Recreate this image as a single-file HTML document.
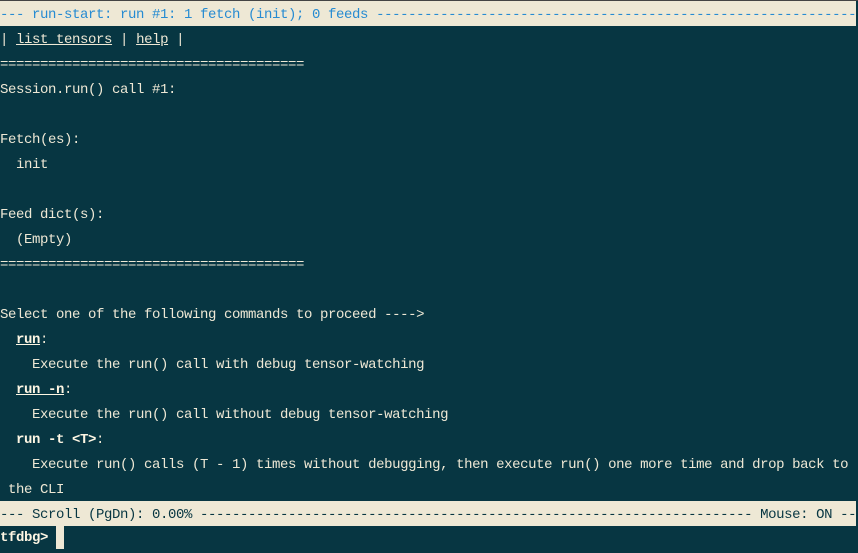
<!DOCTYPE html>
<html><head><style>
html,body{margin:0;padding:0;background:#073642;width:858px;height:553px;overflow:hidden}
.t{position:absolute;left:0;top:0;width:858px;height:1px;background:#444}
.r{position:absolute;left:0;width:856px;height:25px;line-height:25px;font-family:"Liberation Mono",monospace;font-size:14px;letter-spacing:-0.4px;color:#eee8d5;white-space:pre;overflow:hidden}
.r span.x{position:relative;top:2px}
.bar{background:#eee8d5;color:#268bd2}
.bar2{background:#eee8d5;color:#073642}
b{color:#fdf6e3}
u{text-decoration:underline}
.cur{display:inline-block;width:8px;height:23px;background:#eee8d5;vertical-align:middle}
</style></head><body>
<div class="t"></div>
<div class="r bar" style="top:1px"><span class="x">--- run-start: run #1: 1 fetch (init); 0 feeds ------------------------------------------------------------------</span></div>
<div class="r" style="top:26px"><span class="x">| <u>list_tensors</u> | <u>help</u> |</span></div>
<div class="r" style="top:51px"><span class="x">======================================</span></div>
<div class="r" style="top:76px"><span class="x">Session.run() call #1:</span></div>
<div class="r" style="top:126px"><span class="x">Fetch(es):</span></div>
<div class="r" style="top:151px"><span class="x">  init</span></div>
<div class="r" style="top:201px"><span class="x">Feed dict(s):</span></div>
<div class="r" style="top:226px"><span class="x">  (Empty)</span></div>
<div class="r" style="top:251px"><span class="x">======================================</span></div>
<div class="r" style="top:301px"><span class="x">Select one of the following commands to proceed ----></span></div>
<div class="r" style="top:326px"><span class="x">  <b><u>run</u></b>:</span></div>
<div class="r" style="top:351px"><span class="x">    Execute the run() call with debug tensor-watching</span></div>
<div class="r" style="top:376px"><span class="x">  <b><u>run -n</u></b>:</span></div>
<div class="r" style="top:401px"><span class="x">    Execute the run() call without debug tensor-watching</span></div>
<div class="r" style="top:426px"><span class="x">  <b>run -t &lt;T&gt;</b>:</span></div>
<div class="r" style="top:451px"><span class="x">    Execute run() calls (T - 1) times without debugging, then execute run() one more time and drop back to</span></div>
<div class="r" style="top:476px"><span class="x"> the CLI</span></div>
<div class="r bar2" style="top:501px"><span class="x">--- Scroll (PgDn): 0.00% --------------------------------------------------------------------- Mouse: ON --</span></div>
<div class="r" style="top:526px;height:27px"><b>tfdbg&gt;</b> <span class="cur"></span></div>
</body></html>
